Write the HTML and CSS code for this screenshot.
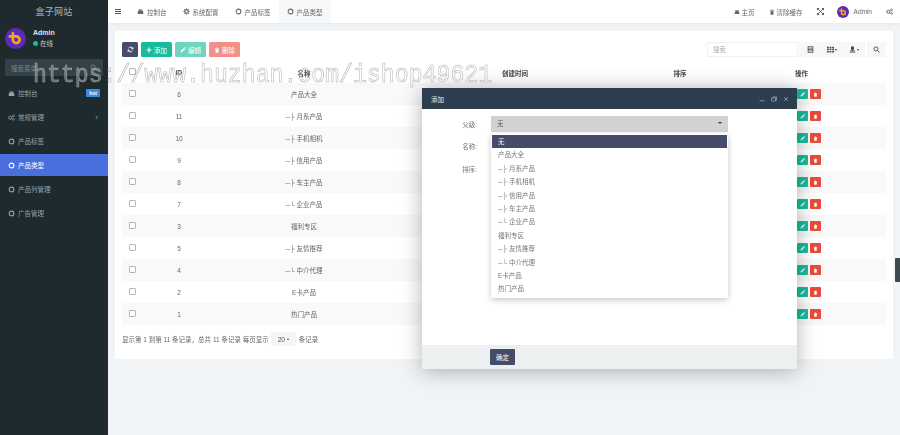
FILE: index.html
```html
<!DOCTYPE html>
<html lang="zh">
<head>
<meta charset="utf-8">
<title>盒子网站</title>
<link rel="stylesheet" href="styles.css">
</head>
<body>
<svg class="defs" width="0" height="0" aria-hidden="true">
  <symbol id="i-ring" viewBox="0 0 10 10"><circle cx="5" cy="5" r="3.4" fill="none" stroke="currentColor" stroke-width="1.5"/></symbol>
  <symbol id="i-dash" viewBox="0 0 10 10"><path fill="currentColor" d="M1 7a4 4 0 1 1 8 0v1.5H1zM2.3 3.2h5.4V2H2.3z"/></symbol>
  <symbol id="i-gear" viewBox="0 0 10 10"><circle cx="5" cy="5" r="2.6" fill="none" stroke="currentColor" stroke-width="1.7"/><path stroke="currentColor" stroke-width="1.3" d="M5 .5v2M5 7.5v2M.5 5h2M7.5 5h2M1.8 1.8l1.4 1.4M6.8 6.8l1.4 1.4M8.2 1.8L6.8 3.2M3.2 6.8L1.8 8.2"/></symbol>
  <symbol id="i-cogs" viewBox="0 0 10 10"><circle cx="3.3" cy="5.4" r="2.2" fill="none" stroke="currentColor" stroke-width="1.3"/><circle cx="7.8" cy="2.7" r="1.3" fill="none" stroke="currentColor"/><circle cx="7.8" cy="7.7" r="1.3" fill="none" stroke="currentColor"/></symbol>
  <symbol id="i-search" viewBox="0 0 10 10"><circle cx="4.2" cy="4.2" r="2.9" fill="none" stroke="currentColor" stroke-width="1.2"/><path stroke="currentColor" stroke-width="1.4" d="M6.4 6.4l2.8 2.8"/></symbol>
  <symbol id="i-pencil" viewBox="0 0 10 10"><path fill="currentColor" d="M1 9l.6-2.6 4.9-4.9 2 2-4.9 4.9zM7.1.9L8 0l2 2-.9.9z"/></symbol>
  <symbol id="i-trash" viewBox="0 0 10 10"><path fill="currentColor" d="M1.5 2h7v1h-7zM4 .8h2V2H4zM2.2 3.6h5.6L7.3 9.6H2.7z"/></symbol>
  <symbol id="i-plus" viewBox="0 0 10 10"><path fill="currentColor" d="M4 1h2v3h3v2H6v3H4V6H1V4h3z"/></symbol>
  <symbol id="i-sync" viewBox="0 0 10 10"><path fill="none" stroke="currentColor" stroke-width="1.3" d="M8.3 4A3.4 3.4 0 0 0 2.2 3M1.7 6a3.4 3.4 0 0 0 6.1 1"/><path fill="currentColor" d="M9 1v3.5H5.5zM1 9V5.5h3.5z"/></symbol>
  <symbol id="i-avatar" viewBox="0 0 20 20"><circle cx="10" cy="10" r="10" fill="#5a2bb5"/><path fill="none" stroke="#f5a524" stroke-width="2.6" stroke-linecap="round" d="M7.5 5v6.2a3.2 3.2 0 1 0 3.2-3.2M4.6 8h6"/></symbol>
</svg>

<div class="app">
  <aside class="sidebar">
    <div class="brand">盒子网站</div>
    <div class="user">
      <svg class="user-avatar"><use href="#i-avatar"/></svg>
      <div class="user-info">
        <div class="user-name">Admin</div>
        <div class="user-status"><span class="dot"></span>在线</div>
      </div>
    </div>
    <div class="side-search"><span>搜索菜单</span><svg class="ic7"><use href="#i-search"/></svg></div>
    <nav class="nav">
      <a class="nav-item"><svg class="ic8"><use href="#i-dash"/></svg><span class="nav-label">控制台</span><b class="hot">hot</b></a>
      <a class="nav-item"><svg class="ic8"><use href="#i-cogs"/></svg><span class="nav-label">常规管理</span><i class="chev">‹</i></a>
      <a class="nav-item"><svg class="ic8"><use href="#i-ring"/></svg><span class="nav-label">产品标签</span></a>
      <a class="nav-item active"><svg class="ic8"><use href="#i-ring"/></svg><span class="nav-label">产品类型</span></a>
      <a class="nav-item"><svg class="ic8"><use href="#i-ring"/></svg><span class="nav-label">产品列管理</span></a>
      <a class="nav-item"><svg class="ic8"><use href="#i-ring"/></svg><span class="nav-label">广告管理</span></a>
    </nav>
  </aside>

  <div class="main">
    <header class="topbar">
      <span class="burger"></span>
      <a class="tab"><svg class="ic7"><use href="#i-dash"/></svg>控制台</a>
      <a class="tab"><svg class="ic7"><use href="#i-gear"/></svg>系统配置</a>
      <a class="tab"><svg class="ic7"><use href="#i-ring"/></svg>产品标签</a>
      <a class="tab tab-active"><svg class="ic7"><use href="#i-ring"/></svg>产品类型</a>
      <div class="top-right">
        <a class="top-link"><svg class="ic6"><use href="#i-dash"/></svg>主页</a>
        <a class="top-link"><svg class="ic6"><use href="#i-trash"/></svg>清除缓存</a>
        <svg class="ic7 top-icon" viewBox="0 0 10 10"><path fill="none" stroke="currentColor" stroke-width="1.2" d="M1 1l8 8M9 1L1 9"/><path fill="currentColor" d="M0 0h3.5L0 3.5zM10 0v3.5L6.5 0zM0 10V6.5L3.5 10zM10 10H6.5L10 6.5z"/></svg>
        <svg class="top-avatar"><use href="#i-avatar"/></svg>
        <span class="top-admin">Admin</span>
        <svg class="ic7 top-icon"><use href="#i-cogs"/></svg>
      </div>
    </header>

    <main class="content">
      <section class="panel">
        <div class="toolbar">
          <button class="btn btn-sync"><svg class="ic7"><use href="#i-sync"/></svg></button>
          <button class="btn btn-add"><svg class="ic6"><use href="#i-plus"/></svg>添加</button>
          <button class="btn btn-add faded"><svg class="ic6"><use href="#i-pencil"/></svg>编辑</button>
          <button class="btn btn-del faded"><svg class="ic6"><use href="#i-trash"/></svg>删除</button>
          <div class="tools">
            <div class="search-input">搜索</div>
            <div class="tool-group">
              <span class="tool"><svg class="ic7" viewBox="0 0 10 10"><path fill="none" stroke="currentColor" d="M1.5.5h7v9h-7zM1.5 3h7M1.5 5h7M1.5 7h7"/></svg></span>
              <span class="tool"><svg class="ic7" viewBox="0 0 10 10"><path fill="currentColor" d="M0 1h2.6v2.2H0zM3.7 1h2.6v2.2H3.7zM7.4 1H10v2.2H7.4zM0 4h2.6v2.2H0zM3.7 4h2.6v2.2H3.7zM7.4 4H10v2.2H7.4zM0 7h2.6v2.2H0zM3.7 7h2.6v2.2H3.7zM7.4 7H10v2.2H7.4z"/></svg><i class="caret"></i></span>
              <span class="tool"><svg class="ic7" viewBox="0 0 10 10"><path fill="currentColor" d="M5 .5a2.3 2.3 0 0 1 2.3 2.4c0 1.6-1 3-2.3 3s-2.3-1.4-2.3-3A2.3 2.3 0 0 1 5 .5zM1 7l2.5-.8h3L9 7v1H1zM1 8.8h8v.8H1z"/></svg><i class="caret"></i></span>
            </div>
            <span class="tool tool-search"><svg class="ic7"><use href="#i-search"/></svg></span>
          </div>
        </div>

        <table class="grid">
          <colgroup>
            <col class="c-check"><col class="c-id"><col class="c-name"><col class="c-time"><col class="c-sort"><col class="c-act">
          </colgroup>
          <thead>
            <tr><th><span class="box box-head"></span></th><th>ID</th><th>名称</th><th>创建时间</th><th>排序</th><th>操作</th></tr>
          </thead>
          <tbody>
            <tr><td><span class="box"></span></td><td>6</td><td>产品大全</td><td></td><td></td><td><span class="act act-edit"><svg class="ic5"><use href="#i-pencil"/></svg></span><span class="act act-del"><svg class="ic5"><use href="#i-trash"/></svg></span></td></tr>
            <tr><td><span class="box"></span></td><td>11</td><td>─├ 月系产品</td><td></td><td></td><td><span class="act act-edit"><svg class="ic5"><use href="#i-pencil"/></svg></span><span class="act act-del"><svg class="ic5"><use href="#i-trash"/></svg></span></td></tr>
            <tr><td><span class="box"></span></td><td>10</td><td>─├ 手机相机</td><td></td><td></td><td><span class="act act-edit"><svg class="ic5"><use href="#i-pencil"/></svg></span><span class="act act-del"><svg class="ic5"><use href="#i-trash"/></svg></span></td></tr>
            <tr><td><span class="box"></span></td><td>9</td><td>─├ 信用产品</td><td></td><td></td><td><span class="act act-edit"><svg class="ic5"><use href="#i-pencil"/></svg></span><span class="act act-del"><svg class="ic5"><use href="#i-trash"/></svg></span></td></tr>
            <tr><td><span class="box"></span></td><td>8</td><td>─├ 车主产品</td><td></td><td></td><td><span class="act act-edit"><svg class="ic5"><use href="#i-pencil"/></svg></span><span class="act act-del"><svg class="ic5"><use href="#i-trash"/></svg></span></td></tr>
            <tr><td><span class="box"></span></td><td>7</td><td>─└ 企业产品</td><td></td><td></td><td><span class="act act-edit"><svg class="ic5"><use href="#i-pencil"/></svg></span><span class="act act-del"><svg class="ic5"><use href="#i-trash"/></svg></span></td></tr>
            <tr><td><span class="box"></span></td><td>3</td><td>福利专区</td><td></td><td></td><td><span class="act act-edit"><svg class="ic5"><use href="#i-pencil"/></svg></span><span class="act act-del"><svg class="ic5"><use href="#i-trash"/></svg></span></td></tr>
            <tr><td><span class="box"></span></td><td>5</td><td>─├ 友情推荐</td><td></td><td></td><td><span class="act act-edit"><svg class="ic5"><use href="#i-pencil"/></svg></span><span class="act act-del"><svg class="ic5"><use href="#i-trash"/></svg></span></td></tr>
            <tr><td><span class="box"></span></td><td>4</td><td>─└ 中介代理</td><td></td><td></td><td><span class="act act-edit"><svg class="ic5"><use href="#i-pencil"/></svg></span><span class="act act-del"><svg class="ic5"><use href="#i-trash"/></svg></span></td></tr>
            <tr><td><span class="box"></span></td><td>2</td><td>E卡产品</td><td></td><td></td><td><span class="act act-edit"><svg class="ic5"><use href="#i-pencil"/></svg></span><span class="act act-del"><svg class="ic5"><use href="#i-trash"/></svg></span></td></tr>
            <tr><td><span class="box"></span></td><td>1</td><td>热门产品</td><td></td><td></td><td><span class="act act-edit"><svg class="ic5"><use href="#i-pencil"/></svg></span><span class="act act-del"><svg class="ic5"><use href="#i-trash"/></svg></span></td></tr>
          </tbody>
        </table>

        <div class="pager">显示第 1 到第 11 条记录，总共 11 条记录 每页显示<span class="page-size">20 <i class="caret caret-up"></i></span>条记录</div>
      </section>
    </main>
  </div>
</div>

<div class="side-tab"></div>

<div class="modal">
  <div class="modal-title">
    <span>添加</span>
    <div class="modal-ctrl">
      <svg class="ic6" viewBox="0 0 10 10"><path stroke="currentColor" stroke-width="1.2" d="M1 8h8"/></svg>
      <svg class="ic6" viewBox="0 0 10 10"><path fill="none" stroke="currentColor" stroke-width="1.1" d="M1 3.5h6.5v5H1zM3 3V1.5h6.2V7H8"/></svg>
      <svg class="ic6" viewBox="0 0 10 10"><path stroke="currentColor" stroke-width="1.2" d="M2 2l6 6M8 2l-6 6"/></svg>
    </div>
  </div>
  <div class="modal-body">
    <div class="field"><label>父级:</label><div class="select">无<i class="caret"></i></div></div>
    <div class="field"><label>名称:</label></div>
    <div class="field"><label>排序:</label></div>
    <ul class="dropdown">
      <li class="selected">无</li>
      <li>产品大全</li>
      <li>─├ 月系产品</li>
      <li>─├ 手机相机</li>
      <li>─├ 信用产品</li>
      <li>─├ 车主产品</li>
      <li>─└ 企业产品</li>
      <li>福利专区</li>
      <li>─├ 友情推荐</li>
      <li>─└ 中介代理</li>
      <li>E卡产品</li>
      <li>热门产品</li>
    </ul>
  </div>
  <div class="modal-foot"><button class="btn-ok">确定</button></div>
</div>

<div class="watermark">https://www.huzhan.com/ishop49621</div>
</body>
</html>
```

FILE: styles.css
```css
* { box-sizing: border-box; }
html, body { margin: 0; height: 100%; overflow: hidden; }
body {
  font-family: "Liberation Sans", "Noto Sans CJK SC", sans-serif;
  font-size: 6.5px;
  color: #555;
  background: #f1f4f6;
}
.defs { position: absolute; }
svg { display: block; flex: none; }
.ic5 { width: 5px; height: 5px; }
.ic6 { width: 6px; height: 6px; }
.ic7 { width: 7px; height: 7px; }
.ic8 { width: 7px; height: 7px; }

.app { display: flex; height: 435px; filter: blur(.4px); }

/* sidebar */
.sidebar { width: 108px; flex: none; background: #1f2a2e; color: #9aa4a9; }
.brand { height: 23px; line-height: 24px; text-align: center; font-size: 9px; color: #aab3b7; letter-spacing: .3px; }
.user { display: flex; align-items: center; gap: 7px; height: 30px; padding: 0 0 0 5px; }
.user-avatar { width: 21px; height: 21px; }
.user-name { font-weight: bold; color: #dfe4e6; line-height: 10px; font-size: 7px; }
.user-status { display: flex; align-items: center; gap: 2px; color: #c5cbce; line-height: 11px; }
.dot { width: 5px; height: 5px; border-radius: 50%; background: #18bc9c; }
.side-search { margin: 6px 5px 0; height: 17px; background: #334248; border-radius: 1px; display: flex; align-items: center; justify-content: space-between; padding: 0 6px; color: #78858b; }
.nav { display: flex; flex-direction: column; margin-top: 5px; }
.nav-item { height: 24px; display: flex; align-items: center; padding: 0 8px; color: #98a2a7; }
.nav-label { margin-left: 3px; flex: 1; }
.nav-item.active { background: #4a6fdc; color: #fff; height: 22px; margin: 1px 0; }
.hot { background: #2f8fe0; color: #fff; font-size: 5px; padding: 1px 3px; border-radius: 1px; }
.chev { font-style: normal; font-size: 8px; margin-right: 2px; }

/* top bar */
.main { flex: 1; min-width: 0; display: flex; flex-direction: column; }
.topbar { height: 23px; background: #fff; display: flex; align-items: center; padding-left: 7px; box-shadow: 0 1px 5px rgba(0,0,0,.05); color: #666; }
.burger { width: 6px; height: 5px; margin-right: 8px; border-top: 1px solid #555; border-bottom: 1px solid #555; }
.burger::after { content: ""; display: block; height: 1px; margin-top: 1px; background: #555; }
.tab { height: 23px; display: flex; align-items: center; gap: 3px; padding: 0 8px; }
.tab-active { background: #f7f8f9; }
.top-right { margin-left: auto; display: flex; align-items: center; padding-right: 7px; }
.top-link { display: flex; align-items: center; gap: 2px; margin-right: 14px; }
.top-icon { color: #555; }
.top-avatar { width: 12px; height: 12px; margin-left: 13px; margin-right: 5px; }
.top-admin { margin-right: 14px; }

/* panel */
.content { padding: 8px 7px 0; }
.panel { background: #fff; height: 328px; padding: 11px 7px 0; }
.toolbar { display: flex; align-items: center; height: 15px; gap: 3px; }
.btn { height: 15px; border: 0; border-radius: 1.5px; display: flex; align-items: center; justify-content: center; gap: 2px; color: #fff; font: inherit; padding: 0; width: 31px; }
.btn-sync { width: 16px; background: #444c69; }
.btn-add { background: #18bc9c; }
.btn-del { background: #e74c3c; }
.faded { opacity: .62; }
.tools { margin-left: auto; display: flex; align-items: center; }
.search-input { width: 91px; height: 15px; border: 1px solid #eef0f2; padding: 0 5px; line-height: 13px; color: #aaa; margin-right: 1px; }
.tool-group { display: flex; height: 15px; background: #f6f7f8; margin-right: 2px; }
.tool { width: 22px; height: 15px; gap: 1px; display: flex; align-items: center; justify-content: center; color: #444; }
.tool-search { width: 19px; background: #f6f7f8; }
.caret { display: inline-block; width: 0; height: 0; border: 1.5px solid transparent; border-top: 2px solid currentColor; border-bottom: 0; }
.caret-up { border-top: 0; border-bottom: 2px solid currentColor; vertical-align: 1px; }

/* table */
.grid { width: 764px; table-layout: fixed; border-collapse: collapse; margin-top: 7px; }
.c-check { width: 20px; }
.c-id { width: 74px; }
.c-name { width: 176px; }
.c-time { width: 248px; }
.c-sort { width: 80px; }
.c-act { width: 166px; }
.grid th { height: 19px; font-weight: bold; color: #444; text-align: center; padding: 0 0 2px; vertical-align: middle; }
.grid td { height: 22px; text-align: center; padding: 0; vertical-align: middle; color: #666; }
.grid th:nth-child(4) { text-align: left; padding-left: 110px; }
.grid th:last-child { text-align: left; padding-left: 75px; }
.grid td:last-child { text-align: left; padding-left: 77px; }
.grid tbody tr:nth-child(odd) { background: #f9f9f9; }
.box { display: block; width: 7px; height: 7px; margin: 0 auto; border: 1px solid #b5b5b5; border-radius: 1px; background: #fff; transform: translateY(-1px); }
.act { display: inline-flex; width: 11px; height: 10px; align-items: center; justify-content: center; color: #fff; border-radius: 1px; vertical-align: middle; margin-right: 2px; }
.act-edit { background: #18bc9c; }
.act-del { background: #e74c3c; }

.pager { display: flex; align-items: center; height: 20px; margin-top: 4px; color: #666; }
.page-size { display: inline-flex; align-items: center; justify-content: center; gap: 2px; width: 25px; height: 14px; margin: 0 3px 0 2px; background: #f4f5f6; color: #555; }

/* overlays */
.side-tab { position: absolute; left: 895px; top: 258px; width: 5px; height: 24px; background: #3d4a50; border-radius: 1px 0 0 1px; }

.modal { position: absolute; left: 422px; top: 88px; width: 375px; height: 281px; background: #fff; display: flex; flex-direction: column; box-shadow: 0 2px 20px rgba(0,0,0,.3); filter: blur(.4px); }
.modal-title { height: 21px; background: #2c3e50; color: #e6eaed; display: flex; align-items: center; justify-content: space-between; padding: 0 8px 0 9px; flex: none; }
.modal-ctrl { display: flex; gap: 6px; color: #aab4bd; }
.modal-body { flex: 1; padding-top: 3.5px; position: relative; }
.field { display: flex; align-items: center; height: 22.5px; }
.field label { width: 55px; text-align: right; color: #777; }
.select { position: absolute; left: 69px; top: 7px; width: 237px; height: 16px; background: #d2d2d2; display: flex; align-items: center; justify-content: space-between; padding: 0 6px 2px; color: #555; }
.select .caret { color: #333; border-width: 2px; border-top-width: 2px; border-bottom: 0; }
.dropdown { position: absolute; left: 69px; top: 25px; width: 237px; height: 164px; margin: 0; padding: 1px; list-style: none; background: #fff; box-shadow: 0 2px 6px rgba(0,0,0,.22); }
.dropdown li { height: 13.4px; line-height: 13.4px; padding-left: 6px; color: #777; }
.dropdown .selected { background: #444c69; color: #fff; }
.modal-foot { height: 24px; background: #ecf0f1; flex: none; padding: 4px 0 0 68px; }
.btn-ok { display: block; width: 25px; height: 16px; border: 0; padding: 0; background: #444c69; color: #fff; font: inherit; border-radius: 1px; }

.watermark { position: absolute; left: 33px; top: 63px; font-family: "Liberation Mono", monospace; font-size: 23.2px; line-height: 28px; white-space: nowrap; color: rgba(255,255,255,.3); -webkit-text-stroke: .45px #a8a8a8; transform: scaleY(1.15); transform-origin: 0 100%; }
```
